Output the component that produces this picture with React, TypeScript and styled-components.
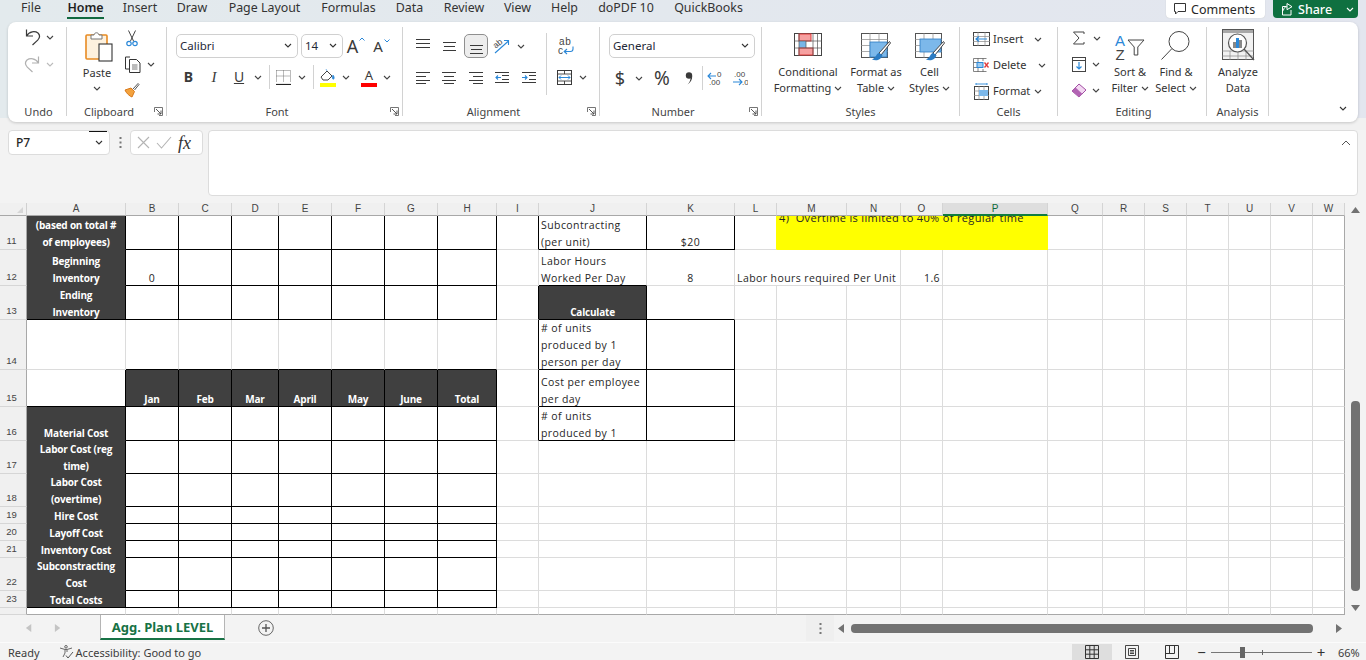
import React from "react";
import styled, { createGlobalStyle } from "styled-components";

const UI = `"Noto Sans", "Open Sans", "Liberation Sans", sans-serif`;
const CELL = `"Open Sans", "Noto Sans", "Liberation Sans", sans-serif`;

const Global = createGlobalStyle`
  html, body { margin: 0; padding: 0; width: 1366px; height: 660px; overflow: hidden; background: #f3f3f3; }
  * { box-sizing: border-box; }
  svg { display: block; flex: none; }
`;

const Page = styled.div`
  width: 1366px; height: 660px; display: flex; flex-direction: column; overflow: hidden;
  font-family: ${UI}; color: #262626; background: #f3f3f3;
`;

/* ---------- menu tabs ---------- */
const TopBand = styled.div`
  background: linear-gradient(90deg, #e3eaed, #e3e6ef);
  height: 130px; padding: 0 8px; display: flex; flex-direction: column;
  background-size: 100% 118px; background-repeat: no-repeat; background-color: #f1f1f1;
`;
const TabBar = styled.div`
  height: 22px; display: flex; align-items: flex-start; padding-left: 14px;
`;
const MenuTab = styled.div<{ $w: number; $mr: number; $active?: boolean }>`
  width: ${(p) => p.$w}px; margin-right: ${(p) => p.$mr}px; height: 19px; line-height: 15px;
  font-size: 12.4px; text-align: center; white-space: nowrap; display: flex; justify-content: center;
  font-weight: ${(p) => (p.$active ? 600 : 400)}; color: ${(p) => (p.$active ? "#1f1f1f" : "#333")};
  border-bottom: 2px solid ${(p) => (p.$active ? "#11693f" : "transparent")};
`;
const Spacer = styled.div`flex: 1;`;
const CommentsBtn = styled.div`
  width: 99px; height: 18px; background: #fff; border-radius: 0 0 4px 4px; display: flex; align-items: center;
  padding-left: 8px; gap: 5px; font-size: 12.5px; box-shadow: 0 0 1px #bbb; margin-right: 8px;
`;
const ShareBtn = styled.div`
  width: 85px; height: 18px; background: #0f7040; color: #fff; border-radius: 0 0 4px 4px; display: flex; align-items: center;
  padding-left: 8px; gap: 4px; font-size: 12.5px; font-weight: 500;
`;
const ShareChev = styled.span`margin-left: 10px; display: flex;`;

/* ---------- ribbon ---------- */
const Ribbon = styled.div`
  height: 100px; background: #fff; border-radius: 8px; display: flex; align-items: flex-start;
  box-shadow: 0 1px 3px rgba(0,0,0,.18); position: relative; font-size: 11px; color: #333;
`;
const Group = styled.div<{ $w: number }>`
  width: ${(p) => p.$w}px; height: 89px; margin-top: 5px; flex: none; display: flex; flex-direction: column;
  border-right: 1px solid #d2d2d2;
`;
const GroupBody = styled.div<{ $pl?: number; $pt?: number; $row?: boolean }>`
  flex: 1; min-height: 0; display: flex; flex-direction: ${(p) => (p.$row ? "row" : "column")};
  padding: ${(p) => p.$pt ?? 7}px 0 0 ${(p) => p.$pl ?? 0}px;
`;
const GroupFoot = styled.div`
  height: 16px; margin-bottom: -3px; display: flex; align-items: center; flex: none;
`;
const GroupLabel = styled.div<{ $pl?: number }>`
  flex: 1; text-align: center; font-size: 11px; color: #444; padding-left: ${(p) => p.$pl ?? 0}px; white-space: nowrap;
`;
const Launcher = styled.div`width: 15px; display: flex; justify-content: center;`;
const Line = styled.div<{ $h?: number; $mt?: number }>`
  display: flex; align-items: center; height: ${(p) => p.$h ?? 24}px; margin-top: ${(p) => p.$mt ?? 0}px; flex: none;
`;
const Slot = styled.div<{ $w: number; $h?: number }>`
  width: ${(p) => p.$w}px; ${(p) => (p.$h ? `height:${p.$h}px;` : "")} flex: none; display: flex;
  align-items: center; justify-content: center; white-space: nowrap;
`;
const VRule = styled.div<{ $h?: number; $mt?: number }>`
  width: 1px; height: ${(p) => p.$h ?? 24}px; margin-top: ${(p) => p.$mt ?? 0}px; background: #d2d2d2; flex: none;
`;
const Drop = styled.div<{ $w: number; $mr?: number }>`
  width: ${(p) => p.$w}px; height: 24px; margin-right: ${(p) => p.$mr ?? 0}px; border: 1px solid #d0d0d0; border-radius: 5px; flex: none;
  display: flex; align-items: center; justify-content: space-between; padding: 0 5px 2px 3px;
  font-size: 11.5px; color: #1f2937;
`;
const Pressed = styled.div`
  width: 24px; height: 24px; border: 1px solid #8f8f8f; background: #ededed; border-radius: 5px;
  display: flex; align-items: center; justify-content: center; flex: none;
`;
const Glyph = styled.span<{ $size?: number; $weight?: number; $italic?: boolean; $serif?: boolean; $under?: boolean; $color?: string }>`
  font-size: ${(p) => p.$size ?? 13}px; font-weight: ${(p) => p.$weight ?? 400}; line-height: 1;
  font-style: ${(p) => (p.$italic ? "italic" : "normal")};
  font-family: ${(p) => (p.$serif ? `"Liberation Serif", serif` : "inherit")};
  text-decoration: ${(p) => (p.$under ? "underline" : "none")}; color: ${(p) => p.$color ?? "#3a3a3a"};
`;
const ColorA = styled.div<{ $bar: string }>`
  width: 16px; height: 19px; display: flex; flex-direction: column; align-items: center; justify-content: flex-end;
  font-size: 13px; line-height: 13px; color: #3a3a3a;
  &::after { content: ""; width: 16px; height: 4px; background: ${(p) => p.$bar}; margin-top: 1px; flex: none; }
`;
const GrowA = styled.div`display: flex; align-items: flex-start; gap: 1px;`;
const BigItem = styled.div<{ $w: number; $pl?: number }>`
  width: ${(p) => p.$w}px; flex: none; display: flex; flex-direction: column; align-items: center; padding-left: ${(p) => p.$pl ?? 0}px;
`;
const BigIcon = styled.div<{ $h: number; $top?: number; $left?: number }>`
  height: ${(p) => p.$h}px; padding-top: ${(p) => p.$top ?? 0}px; padding-left: ${(p) => p.$left ?? 0}px; display: flex; justify-content: center; flex: none;
`;
const BigText = styled.div`
  height: 16px; line-height: 16px; font-size: 11px; white-space: nowrap; display: flex; align-items: center; gap: 3px; flex: none;
`;
const ActionStack = styled.div`display: flex; flex-direction: column; margin-top: -1px; flex: none;`;
const CellAction = styled.div`
  height: 26px; display: flex; align-items: center; font-size: 11px; padding-left: 13px; flex: none;
`;
const ActionText = styled.span<{ $w: number }>`
  width: ${(p) => p.$w}px; padding-left: 3px; white-space: nowrap; line-height: 14px; margin-top: -1px;
`;
const StackCol = styled.div<{ $w: number; $pl?: number }>`
  width: ${(p) => p.$w}px; flex: none; display: flex; flex-direction: column; padding-left: ${(p) => p.$pl ?? 0}px;
`;
const Collapse = styled.div`
  position: absolute; right: 10px; bottom: 11px;
`;

/* ---------- formula bar ---------- */
const FormulaRow = styled.div`
  height: 66px; margin-top: 0; padding: 0 8px; display: flex; align-items: flex-start; flex: none;
`;
const NameBox = styled.div`
  width: 102px; height: 25px; background: #fff; border: 1px solid #dcdcdc; border-radius: 4px; display: flex; align-items: center;
  justify-content: space-between; padding: 0 5px 0 7px; font-size: 12px; font-weight: 500; position: relative;
  &::before { content: ""; position: absolute; right: 2px; top: 0; width: 18px; height: 1px; background: #111; }
`;
const Dots = styled.div`width: 20px; height: 25px; display: flex; align-items: center; justify-content: center;`;
const FxBox = styled.div`
  width: 73px; height: 25px; background: #fff; border: 1px solid #dcdcdc; border-radius: 4px; display: flex; align-items: center;
  padding-left: 5px; gap: 6px; margin-right: 5px;
`;
const FxText = styled.span`
  font-family: "Liberation Serif", serif; font-style: italic; font-weight: 400; font-size: 18px; color: #333; line-height: 1;
`;
const FormulaInput = styled.div`
  flex: 1; height: 66px; background: #fff; border: 1px solid #dcdcdc; border-radius: 4px; display: flex; justify-content: flex-end; padding: 9px 6px 0 0;
`;

/* ---------- sheet ---------- */
const Workspace = styled.div`
  height: 412px; margin-top: 7px; display: flex; flex: none;
`;
const Sheet = styled.div<{ $cols: string; $rows: string }>`
  width: 1345px; height: 412px; display: grid; overflow: hidden; background: #fff;
  grid-template-columns: ${(p) => p.$cols}; grid-template-rows: ${(p) => p.$rows};
  font-family: ${CELL};
`;
const Corner = styled.div`
  background: #f0f0f0; border-right: 1px solid #d0d0d0; border-bottom: 1px solid #a8a8a8; display: flex; align-items: flex-end; justify-content: flex-end; padding: 0 3px 2px 0;
`;
const ColHead = styled.div<{ $sel?: boolean }>`
  background: ${(p) => (p.$sel ? "#dedede" : "#f0f0f0")}; color: ${(p) => (p.$sel ? "#0f6b3d" : "#444")};
  border-right: 1px solid #d4d4d4; border-bottom: ${(p) => (p.$sel ? "2px solid #107c41" : "1px solid #a8a8a8")};
  display: flex; justify-content: center; align-items: center; font: 10px/1 "Liberation Sans", sans-serif; overflow: hidden;
`;
const RowHead = styled.div`
  background: #f0f0f0; color: #444; border-right: 1px solid #a8a8a8; border-bottom: 1px solid #d6d6d6;
  display: flex; justify-content: center; align-items: flex-end; padding: 0 3px 2px 0; font: 9.5px/12px "Liberation Sans", sans-serif;
`;
const Cell = styled.div<{ $rc: string; $bc: string; $bg?: string; $align: string; $span?: number; $note?: boolean; $fg?: string; $bold?: boolean }>`
  border-right: 1px solid ${(p) => p.$rc}; border-bottom: 1px solid ${(p) => p.$bc};
  background: ${(p) => p.$bg ?? "#fff"}; color: ${(p) => p.$fg ?? "#262626"};
  grid-column: span ${(p) => p.$span ?? 1}; display: flex; align-items: ${(p) => (p.$note ? "flex-start" : "flex-end")};
  justify-content: ${(p) => p.$align}; padding: 0 2px; min-width: 0;
  overflow: ${(p) => (p.$note ? "hidden" : "visible")};
  font-size: ${(p) => (p.$bold ? 10 : p.$note ? 11 : 10.5)}px; font-weight: ${(p) => (p.$bold ? 700 : 400)};
  letter-spacing: ${(p) => (p.$bold ? -0.2 : p.$note ? 0.35 : 0.42)}px;
  text-align: ${(p) => (p.$align === "center" ? "center" : p.$align === "flex-end" ? "right" : "left")};
`;
const CellText = styled.span<{ $note?: boolean }>`
  white-space: pre; line-height: 17px; margin-bottom: ${(p) => (p.$note ? 0 : -2)}px; margin-top: ${(p) => (p.$note ? -7 : 0)}px;
`;
const VScroll = styled.div`
  width: 21px; height: 412px; display: flex; flex-direction: column; align-items: center; padding-top: 3px; flex: none;
`;
const VThumb = styled.div`
  width: 9px; height: 190px; margin-top: 186px; background: #727272; border-radius: 4px; flex: none;
`;
const VDown = styled.div`margin-top: 13px;`;

/* ---------- sheet tabs ---------- */
const SheetTabs = styled.div`
  height: 27px; display: flex; align-items: flex-start; flex: none; background: #f3f3f3;
`;
const Nav = styled.div`width: 100px; height: 25px; display: flex; align-items: center; padding-left: 15px; flex: none;`;
const ActiveTab = styled.div`
  width: 125px; height: 25px; background: #fff; border: 1px solid #b5b5b5; border-top: none; border-bottom: 2px solid #177245;
  display: flex; align-items: center; justify-content: center; color: #177245; font-weight: 700; font-size: 13px; flex: none; white-space: nowrap; padding-top: 1px;
`;
const AddBtn = styled.div`margin-left: 33px; height: 25px; display: flex; align-items: center; flex: none;`;
const Splitter = styled.div`
  width: 28px; height: 26px; background: #efefef; display: flex; align-items: center; justify-content: center; flex: none; margin-left: 532px;
`;
const HScroll = styled.div`
  flex: 1; height: 26px; display: flex; align-items: center; padding-left: 3px;
`;
const HThumb = styled.div`
  width: 462px; height: 9px; margin: 0 0 0 5px; background: #727272; border-radius: 4px; flex: none;
`;
const HRight = styled.div`margin-left: 22px;`;

/* ---------- status ---------- */
const Status = styled.div`
  height: 18px; display: flex; align-items: center; font-size: 11px; color: #3c3c3c; padding: 1px 0 0 8px; border-top: 1px solid #fbfbfb; flex: none;
`;
const Access = styled.div`
  margin-left: 19px; display: flex; align-items: center; gap: 2px; white-space: nowrap;
`;
const ViewBtn = styled.div<{ $on?: boolean }>`
  width: 40px; height: 17px; display: flex; align-items: center; justify-content: center; background: ${(p) => (p.$on ? "#dedede" : "transparent")}; flex: none;
`;
const StatusGap = styled.div`flex: 1;`;
const ZoomSlot = styled.div<{ $w?: number }>`width: ${(p) => p.$w ?? 18}px; text-align: center; font-size: 15px; line-height: 15px; color: #333; flex: none;`;
const ZoomTrack = styled.div`
  width: 101px; height: 1px; background: #777; position: relative; flex: none;
`;
const ZoomThumb = styled.div`position: absolute; left: 29px; top: -5px; width: 5px; height: 11px; background: #666;`;
const ZoomTick = styled.div`position: absolute; left: 51px; top: -2px; width: 1px; height: 5px; background: #666;`;
const ZoomValue = styled.div`width: 36px; padding-left: 8px; font-size: 11px; flex: none;`;

/* ---------- icons ---------- */
const Chev = ({ c = "#444", w = 8 }: { c?: string; w?: number }) => (
  <svg width={w} height={5} viewBox="0 0 8 5"><path d="M1 1l3 3 3-3" fill="none" stroke={c} strokeWidth="1.1" /></svg>
);
const MiniChev = ({ up }: { up?: boolean }) => (
  <svg width={6} height={4} viewBox="0 0 6 4"><path d={up ? "M.5 3.500L3 1l2.500 2.500" : "M.5 .5L3 3l2.500-2.500"} fill="none" stroke="#2b88d8" strokeWidth="1" /></svg>
);
const Undo = ({ c = "#3a3a3a", flip = false }: { c?: string; flip?: boolean }) => (
  <svg width={17} height={18} viewBox="0 0 17 18" style={flip ? { transform: "scaleX(-1)" } : undefined}>
    <path d="M2.500 1.500V8H9M2.500 8C5.500 3 11 2.800 14 5c2 2 1.700 5-.3 7.200L8.500 17" fill="none" stroke={c} strokeWidth="1.2" />
  </svg>
);
const PasteIcon = () => (
  <svg width={30} height={31} viewBox="0 0 30 31">
    <rect x="2" y="4" width="21" height="24" rx="1" fill="#fdf1de" stroke="#e88b22" strokeWidth="1.600" />
    <path d="M7 8V4h3c.4-3 4.600-3 5 0h3v4z" fill="#fff" stroke="#777" strokeWidth="1" />
    <rect x="15" y="13" width="13" height="17" fill="#fff" stroke="#333" strokeWidth="1.100" />
  </svg>
);
const CutIcon = () => (
  <svg width={12} height={17} viewBox="0 0 12 17">
    <path d="M2.500 .5L7.500 11M9.500 .5L4.500 11" fill="none" stroke="#444" strokeWidth="1" />
    <circle cx="3" cy="13.500" r="2.200" fill="none" stroke="#2b88d8" strokeWidth="1.200" />
    <circle cx="9" cy="13.500" r="2.200" fill="none" stroke="#2b88d8" strokeWidth="1.200" />
  </svg>
);
const CopyIcon = () => (
  <svg width={17} height={17} viewBox="0 0 17 17">
    <path d="M6 1H1.500v12H5" fill="none" stroke="#333" />
    <path d="M5.500 3.500h7l3.500 3.500v9.500H5.500z" fill="#fff" stroke="#333" />
    <path d="M8 9h5.500M8 11h5.500M8 13h5.500" stroke="#555" strokeWidth=".8" />
  </svg>
);
const BrushIcon = () => (
  <svg width={16} height={16} viewBox="0 0 16 16">
    <path d="M1 8l6-2 3.500 3.500L8 15C6 14.500 2 11 1 8z" fill="#f3a23e" stroke="#d9791b" />
    <path d="M9 7l5-5.500 1 1L10.500 8" fill="#fff" stroke="#555" />
  </svg>
);
const LaunchIcon = () => (
  <svg width={9} height={9} viewBox="0 0 9 9">
    <path d="M.5 5V.5H8.500V8.500H5" fill="none" stroke="#666" strokeWidth=".9" />
    <path d="M2 2l5 5M7 3.500V7H3.500" fill="none" stroke="#444" strokeWidth=".9" />
  </svg>
);
const BorderIcon = () => (
  <svg width={15} height={15} viewBox="0 0 15 15">
    <path d="M.5.5h14M.5.5v11M14.500.5v11M.5 6h14M7.500.5v11" fill="none" stroke="#666" strokeWidth=".9" strokeDasharray="1 1" />
    <path d="M0 14.500h15" stroke="#222" strokeWidth="1.200" />
  </svg>
);
const FillIcon = () => (
  <svg width={16} height={19} viewBox="0 0 16 19">
    <path d="M1 9l6-6 5 5-4 4H3z" fill="#fff" stroke="#444" />
    <path d="M7 3L6 1M13 7c1.500 1.600 1.600 3.500.5 4.300-1 0-2-1.800-.5-4.300z" fill="#2b88d8" stroke="#2b88d8" strokeWidth=".6" />
    <rect x="0" y="15" width="16" height="4" fill="#ffff00" />
  </svg>
);
const Lines = ({ ys, x }: { ys: number[]; x: [number, number][] }) => (
  <svg width={15} height={15} viewBox="0 0 15 15">
    {ys.map((y, i) => <path key={i} d={`M${x[i % x.length][0]} ${y}H${x[i % x.length][1]}`} stroke="#3a3a3a" strokeWidth="1" />)}
  </svg>
);
const Indent = ({ flip = false }: { flip?: boolean }) => (
  <svg width={15} height={15} viewBox="0 0 15 15">
    <path d={flip ? "M1 2.500h14M8 5.500h7M8 9.500h7M1 12.500h14" : "M0 2.500h14M7 5.500h7M7 9.500h7M0 12.500h14"} stroke="#3a3a3a" />
    <path d={flip ? "M1 7.500h5M4 5.500l2 2-2 2" : "M1 7.500h5M3 5.500l-2 2 2 2"} fill="none" stroke="#2b88d8" strokeWidth="1.100" />
  </svg>
);
const OrientIcon = () => (
  <svg width={17} height={16} viewBox="0 0 17 16" overflow="visible">
    <path d="M2 15L15.500 3M11 2.500h4.500V7" fill="none" stroke="#2b88d8" strokeWidth="1.100" />
    <text x="0" y="9" fontSize="8.500" fill="#444" transform="rotate(-40 4 6)" fontFamily="Liberation Sans, sans-serif">ab</text>
  </svg>
);
const WrapArrow = () => (
  <svg width={11} height={9} viewBox="0 0 11 9">
    <path d="M10 .5v2.500a2.500 2.500 0 0 1-2.500 2.500H1.500M4 3L1.200 5.500 4 8" fill="none" stroke="#2b88d8" strokeWidth="1.100" />
  </svg>
);
const WrapBox = styled.div`
  width: 16px; height: 17px; font-size: 10px; line-height: 8px; color: #444; display: grid; grid-template-columns: auto auto; justify-content: start; align-items: end; font-family: "Liberation Sans", sans-serif;
`;
const WrapTop = styled.span`grid-column: span 2; padding-left: 1px; letter-spacing: .6px;`;
const MergeIcon = () => (
  <svg width={15} height={15} viewBox="0 0 15 15">
    <rect x=".5" y=".5" width="14" height="14" fill="none" stroke="#3a3a3a" />
    <path d="M.5 4h14M.5 11h14M7.500 0v4M7.500 11v4" stroke="#3a3a3a" strokeWidth=".9" />
    <path d="M2 7.500h11M4 5.500l-2 2 2 2M11 5.500l2 2-2 2" fill="none" stroke="#2b88d8" strokeWidth="1" />
  </svg>
);
const CommaIcon = () => (
  <svg width={9} height={13} viewBox="0 0 9 13">
    <circle cx="4" cy="3.500" r="3.200" fill="#3a3a3a" />
    <path d="M7.200 4c.2 3.500-1.500 6.500-4.700 8.500C5 10 5.500 8 5.500 6z" fill="#3a3a3a" />
  </svg>
);
const DecIcon = ({ up }: { up: boolean }) => (
  <svg width={16} height={17} viewBox="0 0 16 17">
    <path d={up ? "M1 6h8M4 3L1 6l3 3" : "M1 12h9M7 9l3 3-3 3"} fill="none" stroke="#2b88d8" strokeWidth="1.100" />
    <text x={up ? 10 : 2} y="7" fontSize="8" fill="#444" fontFamily="Liberation Sans, sans-serif">{up ? "0" : ".00"}</text>
    <text x={up ? 2 : 10} y="15" fontSize="8" fill="#444" fontFamily="Liberation Sans, sans-serif">{up ? ".00" : ".0"}</text>
  </svg>
);
const CondIcon = () => (
  <svg width={28} height={23} viewBox="0 0 28 23">
    <rect x=".5" y=".5" width="27" height="22" fill="#fff" stroke="#444" />
    <rect x="5" y="1" width="12" height="7" fill="#f6a0a0" stroke="#e23b3b" />
    <rect x="5" y="8" width="7" height="7" fill="#78b5e8" />
    <rect x="5" y="15" width="14" height="7" fill="#f6a0a0" stroke="#e23b3b" />
    <path d="M5 0v23M12 8v7M19 0v23M23.500 0v23M0 8h28M0 15h28" stroke="#555" strokeWidth=".7" fill="none" />
  </svg>
);
const TableBrush = ({ wide }: { wide?: boolean }) => (
  <svg width={30} height={29} viewBox="0 0 30 29">
    <rect x=".5" y=".5" width="26" height="24" fill="#fff" stroke="#555" />
    <path d="M0 6.500h27M0 12.500h27M0 18.500h27M9 0v25M18 0v25" stroke="#888" strokeWidth=".7" />
    <rect x={wide ? 5 : 9} y={wide ? 6 : 9} width={wide ? 21 : 17} height={wide ? 13 : 15} fill="#7cb8ea" stroke="#2b7cc4" strokeWidth=".8" />
    <path d="M28.500 8.500L18 20l2 2L29.500 10z" fill="#fff" stroke="#444" />
    <path d="M18 20c-3 .5-2 4-7 6.500 4 1.500 9 1 10.500-4.500z" fill="#2b7cc4" />
  </svg>
);
const InsertIcon = () => (
  <svg width={17} height={15} viewBox="0 0 17 15">
    <rect x=".5" y=".5" width="16" height="13" fill="#fff" stroke="#444" />
    <path d="M0 4.500h17M0 9.500h17M5 0v14M12 0v14" stroke="#888" strokeWidth=".7" />
    <path d="M14 7H3M6 4.500L3 7l3 2.500" fill="none" stroke="#2b88d8" strokeWidth="1.200" />
  </svg>
);
const DeleteIcon = () => (
  <svg width={17} height={15} viewBox="0 0 17 15">
    <path d="M.5.5h13M.5 13.500h13M.5.5v13M.5 4.500h4M.5 9.500h4M5 0v4M5 10v4M10 0v3M10 11v3" fill="none" stroke="#666" strokeWidth=".8" />
    <rect x="4" y="4.500" width="6" height="5" fill="#9ccbf0" stroke="#2b88d8" />
    <path d="M11.500 4.500l4 5M15.500 4.500l-4 5" stroke="#e23b3b" strokeWidth="1.300" />
  </svg>
);
const FormatIcon = () => (
  <svg width={17} height={17} viewBox="0 0 17 17">
    <rect x="1.500" y="3.500" width="14" height="13" fill="#fff" stroke="#444" />
    <path d="M1 8h15M1 12.500h15M6 3v14M11 3v14" stroke="#888" strokeWidth=".7" />
    <rect x="6" y="7" width="9" height="6" fill="#7cb8ea" />
    <path d="M3 1h11M3 0v2M14 0v2" stroke="#2b88d8" strokeWidth=".9" />
  </svg>
);
const SigmaIcon = () => (
  <svg width={13} height={14} viewBox="0 0 13 14"><path d="M12 3V1H1.500L7 7l-5.500 6H12v-2" fill="none" stroke="#444" /></svg>
);
const FillDown = () => (
  <svg width={14} height={15} viewBox="0 0 14 15">
    <rect x=".5" y=".5" width="13" height="14" fill="#fff" stroke="#444" />
    <path d="M0 3.500h14" stroke="#444" />
    <path d="M7 5v7M4.500 9.500L7 12l2.500-2.500" fill="none" stroke="#2b88d8" strokeWidth="1.200" />
  </svg>
);
const Eraser = () => (
  <svg width={16} height={15} viewBox="0 0 16 15">
    <path d="M1 8l7-7 7 6-7 7z" fill="#f3d7f2" stroke="#a24ea3" />
    <path d="M1 8l3.500-3.500 7 6.500L8 14z" fill="#b264b3" />
  </svg>
);
const SortIcon = () => (
  <svg width={18} height={17} viewBox="0 0 18 17"><path d="M1 1h16l-6.200 7v8H7.200V8z" fill="#fff" stroke="#444" /></svg>
);
const SortLetters = styled.div`
  display: flex; flex-direction: column; font-size: 15px; line-height: 14px; align-items: center; font-family: "Liberation Sans", sans-serif;
`;
const SortA = styled.span`color: #2b88d8;`;
const SortZ = styled.span`color: #444;`;
const SortWrap = styled.div`display: flex; align-items: center; gap: 2px;`;
const FindIcon = () => (
  <svg width={30} height={30} viewBox="0 0 30 30">
    <circle cx="18" cy="11.500" r="10" fill="#fff" stroke="#444" />
    <path d="M11 18.500L.5 29.500" stroke="#444" />
  </svg>
);
const AnalyzeIcon = () => (
  <svg width={33} height={32} viewBox="0 0 33 32">
    <rect x=".5" y=".5" width="31" height="30" fill="#f2f2f2" stroke="#555" />
    <rect x="1" y="1" width="30" height="3" fill="#a8a8a8" />
    <path d="M0 22h32M0 27h32M8 22v9M16 22v9M24 22v9" stroke="#888" strokeWidth=".7" />
    <circle cx="15.500" cy="14" r="9" fill="#fff" stroke="#555" strokeWidth="1.200" />
    <rect x="11" y="13" width="3" height="6" fill="#888" />
    <rect x="14" y="9" width="3" height="10" fill="#2b88d8" />
    <rect x="17" y="11" width="3" height="8" fill="#888" />
    <path d="M22 20l10 11" stroke="#555" strokeWidth="1.300" />
  </svg>
);
const CommentIcon = () => (
  <svg width={12} height={12} viewBox="0 0 12 12"><path d="M.5.5h11v8H4L1.500 11V8.500H.5z" fill="none" stroke="#333" /></svg>
);
const ShareIcon = () => (
  <svg width={13} height={13} viewBox="0 0 13 13">
    <path d="M5 3.500H1.500V12H10V7" fill="none" stroke="#fff" />
    <path d="M6 .5l5 3.200-5 3zM6 3.700c-2 0-3.500 1.500-3.500 3.800" fill="none" stroke="#fff" />
  </svg>
);
const XIcon = () => (
  <svg width={13} height={13} viewBox="0 0 13 13"><path d="M1 1l11 11M12 1L1 12" stroke="#b4b4b4" strokeWidth="1.100" /></svg>
);
const CheckIcon = () => (
  <svg width={16} height={13} viewBox="0 0 16 13"><path d="M1 7l4.500 5L15 1" fill="none" stroke="#b4b4b4" strokeWidth="1.100" /></svg>
);
const DotsIcon = () => (
  <svg width={3} height={11} viewBox="0 0 3 11"><path d="M1.500 0v2M1.500 4.500v2M1.500 9v2" stroke="#777" strokeWidth="2" /></svg>
);
const Tri = ({ dir, c = "#727272", s = 8 }: { dir: "u" | "d" | "l" | "r"; c?: string; s?: number }) => {
  const d = { u: "M0 7L4.500 1 9 7z", d: "M0 1h9L4.500 7z", l: "M7 0v9L1 4.500z", r: "M1 0v9l6-4.500z" }[dir];
  return <svg width={s + 1} height={s + 1} viewBox="0 0 9 9"><path d={d} fill={c} /></svg>;
};
const PlusCircle = () => (
  <svg width={16} height={16} viewBox="0 0 16 16">
    <circle cx="8" cy="8" r="7.300" fill="none" stroke="#666" />
    <path d="M4 8h8M8 4v8" stroke="#555" strokeWidth="1.300" />
  </svg>
);
const AccessIcon = () => (
  <svg width={15} height={14} viewBox="0 0 15 14">
    <circle cx="7" cy="1.800" r="1.300" fill="none" stroke="#444" strokeWidth=".8" />
    <path d="M1 3l5 1.500h2L13 3M6 5v3l-2 4M8 5v2" fill="none" stroke="#444" strokeWidth=".8" />
    <path d="M7 10.500l2 2.500 5-6" fill="none" stroke="#444" strokeWidth=".9" />
  </svg>
);
const GridView = () => (
  <svg width={14} height={14} viewBox="0 0 14 14"><path d="M.5.5h13v13H.5zM.5 4.800h13M.5 9.200h13M4.800.5v13M9.200.5v13" fill="none" stroke="#333" /></svg>
);
const PageView = () => (
  <svg width={14} height={14} viewBox="0 0 14 14"><path d="M.5.5h13v13H.5zM3.500 3.500h7v7h-7zM5 5.500h4M5 7h4M5 8.500h4" fill="none" stroke="#333" strokeWidth=".9" /></svg>
);
const BreakView = () => (
  <svg width={14} height={14} viewBox="0 0 14 14"><path d="M.5.5h13v13H.5zM.5 8.500h9M4.500.5v8M9.500.5v8" fill="none" stroke="#333" /></svg>
);

/* ---------- data ---------- */
const TABS: [string, number, number, boolean?][] = [
  ["File", 18, 27], ["Home", 37, 20, true], ["Insert", 32, 21], ["Draw", 30, 22], ["Page Layout", 71, 22],
  ["Formulas", 53, 21], ["Data", 27, 21], ["Review", 40, 20], ["View", 27, 20], ["Help", 27, 20],
  ["doPDF 10", 56, 21], ["QuickBooks", 67, 0],
];

const COLS = ["A","B","C","D","E","F","G","H","I","J","K","L","M","N","O","P","Q","R","S","T","U","V","W"];
const COL_W = [99,53,53,47,53,53,53,59,42,108,88,42,70,54,42,105,55,42,42,42,42,42,32];
const ROWS = [11,12,13,14,15,16,17,18,19,20,21,22,23,24];
const ROW_H = [34,36,34,50,37,34,33,33,17,17,17,33,17,7];

const DARK: Record<string, string> = {
  A11: "(based on total #\nof employees)", A12: "Beginning\nInventory", A13: "Ending\nInventory",
  B15: "Jan", C15: "Feb", D15: "Mar", E15: "April", F15: "May", G15: "June", H15: "Total",
  A16: "Material Cost", A17: "Labor Cost (reg\ntime)", A18: "Labor Cost\n(overtime)", A19: "Hire Cost",
  A20: "Layoff Cost", A21: "Inventory Cost", A22: "Subconstracting\nCost", A23: "Total Costs",
  J13: "Calculate",
};
const LEFT: Record<string, string> = {
  J11: "Subcontracting\n(per unit)", J12: "Labor Hours\nWorked Per Day",
  J14: "# of units\nproduced by 1\nperson per day", J15: "Cost per employee\nper day", J16: "# of units\nproduced by 1",
  L12: "Labor hours required Per Unit",
};
const MID: Record<string, string> = { B12: "0", K11: "$20", K12: "8" };
const BOX = new Set<string>(["J11","K11","J14","K14","J15","K15","J16","K16"]);
for (const c of "BCDEFGH") for (const r of [11,12,13,16,17,18,19,20,21,22,23]) BOX.add(`${c}${r}`);
const isBlack = (id: string) => BOX.has(id) || id in DARK;

const GRID = "#dcdcdc";
const BLACK = "#000";

function Cells() {
  const out: React.ReactNode[] = [];
  ROWS.forEach((r) => {
    out.push(<RowHead key={`h${r}`}>{r === 24 ? "" : r}</RowHead>);
    COLS.forEach((c, i) => {
      const id = `${c}${r}`;
      if (r === 11 && ["N","O","P"].includes(c)) return;
      if (r === 12 && ["M","N"].includes(c)) return;
      if (id === "M11") {
        out.push(
          <Cell key={id} $span={4} $rc="#ffff00" $bc="#ffff00" $bg="#ffff00" $align="flex-start" $note>
            <CellText $note>{"4)  Overtime is limited to 40% of regular time"}</CellText>
          </Cell>
        );
        return;
      }
      const span = id === "L12" ? 3 : 1;
      const nextCol = COLS[i + span];
      const right = nextCol ? `${nextCol}${r}` : "";
      const below = `${c}${r + 1}`;
      const dark = id in DARK;
      const rc = id === "L11" ? "#ffff00" : isBlack(id) || (right && isBlack(right)) ? BLACK : c === "W" ? "#a8a8a8" : GRID;
      let bc = isBlack(id) || isBlack(below) ? BLACK : r === 24 ? "#a8a8a8" : GRID;
      if (c === "A" && dark && below in DARK) bc = "#404040";
      const text = DARK[id] ?? LEFT[id] ?? MID[id] ?? (id === "O12" ? "1.6" : "");
      const align = dark || id in MID ? "center" : id === "O12" ? "flex-end" : "flex-start";
      out.push(
        <Cell key={id} $rc={rc} $bc={bc} $bg={dark ? "#404040" : undefined} $fg={dark ? "#fff" : undefined}
          $bold={dark} $align={align} $span={span}>
          {text && <CellText>{text}</CellText>}
        </Cell>
      );
    });
  });
  return <>{out}</>;
}

const foot = (label: string, launcher = true, pl = 0) => (
  <GroupFoot>
    <GroupLabel $pl={pl}>{label}</GroupLabel>
    {launcher && <Launcher><LaunchIcon /></Launcher>}
  </GroupFoot>
);

export default function App() {
  return (
    <Page>
      <Global />
      <TopBand>
        <TabBar>
          {TABS.map(([t, w, mr, a]) => <MenuTab key={t} $w={w} $mr={mr} $active={a}>{t}</MenuTab>)}
          <Spacer />
          <CommentsBtn><CommentIcon /><span>Comments</span></CommentsBtn>
          <ShareBtn><ShareIcon /><span>Share</span><ShareChev><Chev c="#fff" /></ShareChev></ShareBtn>
        </TabBar>
        <Ribbon>
          <Group $w={59}>
            <GroupBody $pl={12} $pt={0}>
              <Line $h={24} $mt={-2}><Slot $w={24}><Undo /></Slot><Slot $w={12}><Chev /></Slot></Line>
              <Line $h={24} $mt={3}><Slot $w={24}><Undo c="#b0b0b0" flip /></Slot><Slot $w={12}><Chev c="#bbb" /></Slot></Line>
            </GroupBody>
            {foot("Undo", false, 3)}
          </Group>

          <Group $w={100}>
            <GroupBody $row $pt={0}>
              <BigItem $w={56} $pl={4}>
                <BigIcon $h={38} $top={4} $left={4}><PasteIcon /></BigIcon>
                <BigText>Paste</BigText>
                <Slot $w={20} $h={14}><Chev /></Slot>
              </BigItem>
              <StackCol $w={44}>
                <Line $h={26} $mt={-2}><Slot $w={18}><CutIcon /></Slot></Line>
                <Line $h={26}><Slot $w={18}><CopyIcon /></Slot><Slot $w={20}><Chev /></Slot></Line>
                <Line $h={26}><Slot $w={18}><BrushIcon /></Slot></Line>
              </StackCol>
            </GroupBody>
            {foot("Clipboard")}
          </Group>

          <Group $w={236}>
            <GroupBody $pl={9}>
              <Line>
                <Drop $w={122} $mr={3}><span>Calibri</span><Chev c="#333" /></Drop>
                <Drop $w={42}><span>14</span><Chev c="#333" /></Drop>
                <Slot $w={26}><GrowA><Glyph $size={18}>A</Glyph><MiniChev up /></GrowA></Slot>
                <Slot $w={25}><GrowA><Glyph $size={15}>A</Glyph><MiniChev /></GrowA></Slot>
              </Line>
              <Line $mt={7}>
                <Slot $w={25}><Glyph $weight={700} $size={14}>B</Glyph></Slot>
                <Slot $w={26}><Glyph $italic $serif $size={15}>I</Glyph></Slot>
                <Slot $w={24}><Glyph $under $size={14}>U</Glyph></Slot>
                <Slot $w={14}><Chev /></Slot>
                <Slot $w={8}><VRule /></Slot>
                <Slot $w={20}><BorderIcon /></Slot>
                <Slot $w={18}><Chev /></Slot>
                <Slot $w={4}><VRule /></Slot>
                <Slot $w={26}><FillIcon /></Slot>
                <Slot $w={10}><Chev /></Slot>
                <Slot $w={8} />
                <Slot $w={20}><ColorA $bar="#ff0000">A</ColorA></Slot>
                <Slot $w={16}><Chev /></Slot>
              </Line>
            </GroupBody>
            {foot("Font")}
          </Group>

          <Group $w={197}>
            <GroupBody $row $pl={7}>
              <StackCol $w={136}>
                <Line>
                  <Slot $w={26}><Lines ys={[.5, 4.5, 8.5]} x={[[0,14]]} /></Slot>
                  <Slot $w={27}><Lines ys={[3.5, 7.5, 11.5]} x={[[1,14],[2,13],[1,14]]} /></Slot>
                  <Slot $w={1} />
                  <Pressed><Lines ys={[6.5, 10.5, 14.5]} x={[[1,14],[2,13],[1,14]]} /></Pressed>
                  <Slot $w={26}><OrientIcon /></Slot>
                  <Slot $w={3} /><Slot $w={8}><Chev /></Slot>
                </Line>
                <Line $mt={7}>
                  <Slot $w={26}><Lines ys={[2.5,6.5,10.5,13.5]} x={[[0,14],[0,10],[0,14],[0,10]]} /></Slot>
                  <Slot $w={27}><Lines ys={[2.5,6.5,10.5,13.5]} x={[[0,14],[2,12],[0,14],[2,12]]} /></Slot>
                  <Slot $w={26}><Lines ys={[2.5,6.5,10.5,13.5]} x={[[0,14],[4,14],[0,14],[4,14]]} /></Slot>
                  <Slot $w={26}><Indent /></Slot>
                  <Slot $w={26}><Indent flip /></Slot>
                </Line>
              </StackCol>
              <VRule $h={62} $mt={-1} />
              <StackCol $w={50}>
                <Line>
                  <Slot $w={38}>
                    <WrapBox>
                      <WrapTop>ab</WrapTop>
                      <span>c</span>
                      <WrapArrow />
                    </WrapBox>
                  </Slot>
                </Line>
                <Line $mt={7}><Slot $w={35}><MergeIcon /></Slot><Slot $w={2}><Chev /></Slot></Line>
              </StackCol>
            </GroupBody>
            <GroupFoot>
              <GroupLabel>Alignment</GroupLabel>
              <Launcher><LaunchIcon /></Launcher>
            </GroupFoot>
          </Group>

          <Group $w={162}>
            <GroupBody $pl={9}>
              <Line><Drop $w={146}><span>General</span><Chev c="#333" /></Drop></Line>
              <Line $mt={8}>
                <Slot $w={22}><Glyph $size={18}>$</Glyph></Slot>
                <Slot $w={16}><Chev /></Slot>
                <Slot $w={30}><Glyph $size={19}>%</Glyph></Slot>
                <Slot $w={24}><CommaIcon /></Slot>
                <Slot $w={2}><VRule /></Slot>
                <Slot $w={24}><DecIcon up /></Slot>
                <Slot $w={26}><DecIcon up={false} /></Slot>
              </Line>
            </GroupBody>
            {foot("Number")}
          </Group>

          <Group $w={198}>
            <GroupBody $row $pl={8} $pt={6}>
              <BigItem $w={76}>
                <BigIcon $h={31}><CondIcon /></BigIcon>
                <BigText>Conditional</BigText>
                <BigText>Formatting <Chev /></BigText>
              </BigItem>
              <BigItem $w={60}>
                <BigIcon $h={31}><TableBrush /></BigIcon>
                <BigText>Format as</BigText>
                <BigText>Table <Chev /></BigText>
              </BigItem>
              <BigItem $w={47}>
                <BigIcon $h={31}><TableBrush wide /></BigIcon>
                <BigText>Cell</BigText>
                <BigText>Styles <Chev /></BigText>
              </BigItem>
            </GroupBody>
            {foot("Styles", false)}
          </Group>

          <Group $w={98}>
            <GroupBody $pt={0}>
              <ActionStack>
                <CellAction><InsertIcon /><ActionText $w={44}>Insert</ActionText><Chev /></CellAction>
                <CellAction><DeleteIcon /><ActionText $w={48}>Delete</ActionText><Chev /></CellAction>
                <CellAction><FormatIcon /><ActionText $w={44}>Format</ActionText><Chev /></CellAction>
              </ActionStack>
            </GroupBody>
            {foot("Cells", false)}
          </Group>

          <Group $w={149}>
            <GroupBody $row $pt={0}>
              <StackCol $w={48} $pl={12}>
                <Line $h={26} $mt={-2}><Slot $w={17}><SigmaIcon /></Slot><Slot $w={20}><Chev /></Slot></Line>
                <Line $h={26}><Slot $w={17}><FillDown /></Slot><Slot $w={17}><Chev /></Slot></Line>
                <Line $h={26}><Slot $w={17}><Eraser /></Slot><Slot $w={17}><Chev /></Slot></Line>
              </StackCol>
              <BigItem $w={48}>
                <BigIcon $h={37} $top={4}>
                  <SortWrap>
                    <SortLetters><SortA>A</SortA><SortZ>Z</SortZ></SortLetters>
                    <SortIcon />
                  </SortWrap>
                </BigIcon>
                <BigText>Sort &amp;</BigText>
                <BigText>Filter <Chev /></BigText>
              </BigItem>
              <BigItem $w={44}>
                <BigIcon $h={37} $top={3}><FindIcon /></BigIcon>
                <BigText>Find &amp;</BigText>
                <BigText>Select <Chev /></BigText>
              </BigItem>
            </GroupBody>
            {foot("Editing", false, 3)}
          </Group>

          <Group $w={62}>
            <GroupBody $row $pt={2}>
              <BigItem $w={62}>
                <BigIcon $h={35}><AnalyzeIcon /></BigIcon>
                <BigText>Analyze</BigText>
                <BigText>Data</BigText>
              </BigItem>
            </GroupBody>
            {foot("Analysis", false)}
          </Group>
          <Collapse><Chev c="#333" w={10} /></Collapse>
        </Ribbon>
      </TopBand>

      <FormulaRow>
        <NameBox><span>P7</span><Chev c="#333" w={10} /></NameBox>
        <Dots><DotsIcon /></Dots>
        <FxBox><Slot $w={14}><XIcon /></Slot><Slot $w={16}><CheckIcon /></Slot><FxText>fx</FxText></FxBox>
        <FormulaInput><svg width={10} height={6} viewBox="0 0 10 6"><path d="M1 5l4-4 4 4" fill="none" stroke="#555" /></svg></FormulaInput>
      </FormulaRow>

      <Workspace>
        <Sheet $cols={`27px ${COL_W.map((w) => w + "px").join(" ")}`} $rows={`13px ${ROW_H.map((h) => h + "px").join(" ")}`}>
          <Corner><svg width={6} height={6} viewBox="0 0 6 6"><path d="M6 0v6H0z" fill="#d6d6d6" /></svg></Corner>
          {COLS.map((c) => <ColHead key={c} $sel={c === "P"}>{c}</ColHead>)}
          <Cells />
        </Sheet>
        <VScroll>
          <Tri dir="u" />
          <VThumb />
          <VDown><Tri dir="d" /></VDown>
        </VScroll>
      </Workspace>

      <SheetTabs>
        <Nav>
          <Slot $w={28}><Tri dir="l" c="#c4c4c4" s={7} /></Slot>
          <Slot $w={30}><Tri dir="r" c="#c4c4c4" s={7} /></Slot>
        </Nav>
        <ActiveTab>Agg. Plan LEVEL</ActiveTab>
        <AddBtn><PlusCircle /></AddBtn>
        <Splitter><DotsIcon /></Splitter>
        <HScroll>
          <Tri dir="l" />
          <HThumb />
          <HRight><Tri dir="r" /></HRight>
        </HScroll>
      </SheetTabs>

      <Status>
        <span>Ready</span>
        <Access><AccessIcon /><span>Accessibility: Good to go</span></Access>
        <StatusGap />
        <ViewBtn $on><GridView /></ViewBtn>
        <ViewBtn><PageView /></ViewBtn>
        <ViewBtn><BreakView /></ViewBtn>
        <ZoomSlot $w={19}>−</ZoomSlot>
        <ZoomTrack><ZoomThumb /><ZoomTick /></ZoomTrack>
        <ZoomSlot>+</ZoomSlot>
        <ZoomValue>66%</ZoomValue>
      </Status>
    </Page>
  );
}
